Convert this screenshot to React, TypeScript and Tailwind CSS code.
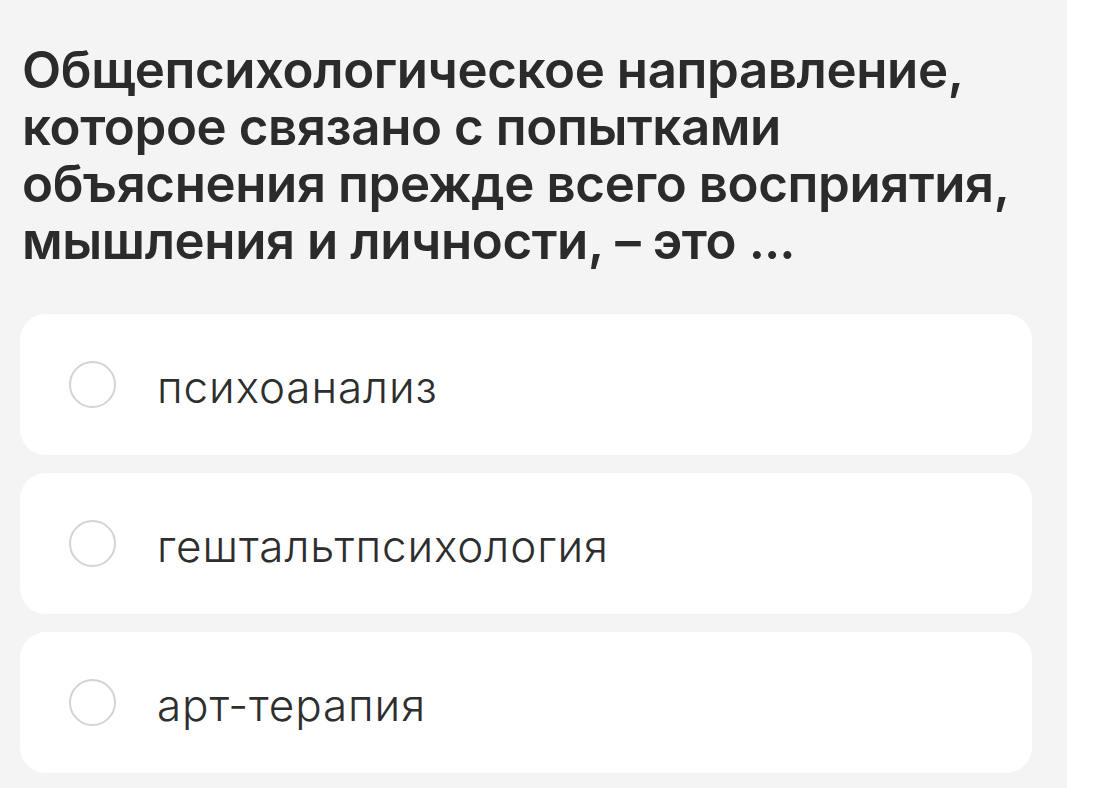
const options = ['психоанализ', 'гештальтпсихология', 'арт-терапия'];

const questionLines = [
  'Общепсихологическое направление,',
  'которое связано с попытками',
  'объяснения прежде всего восприятия,',
];

function Radio() {
  return (
    <span className="block h-[47px] w-[47px] shrink-0 rounded-full border-2 border-[#d2d3d8] bg-white" />
  );
}

export default function App() {
  return (
    <div className="flex h-[788px] w-[1115px] bg-white font-['Inter',sans-serif]">
      <div className="flex w-[1067px] flex-col bg-[#f4f4f4] pl-[20px] pr-[35px]">
        <h1 className="pl-[2px] pt-[41px] text-[51px] font-semibold leading-[57px] tracking-[-0.4px] text-[#2b2b2b]">
          {questionLines.map((line) => (
            <span key={line} className="block whitespace-nowrap">
              {line}
            </span>
          ))}
          <span className="block whitespace-nowrap">
            мышления и личности, – это <span className="tracking-[-1px]">...</span>
          </span>
        </h1>
        <div className="mt-[45px] flex flex-col gap-[18px]">
          {options.map((opt) => (
            <div
              key={opt}
              className="flex h-[141px] items-center gap-[41px] rounded-[26px] bg-white pl-[49px]"
            >
              <Radio />
              <span className="pt-[4px] text-[44px] font-light tracking-[0.9px] text-[#2e2e2e]">
                {opt}
              </span>
            </div>
          ))}
        </div>
      </div>
    </div>
  );
}
